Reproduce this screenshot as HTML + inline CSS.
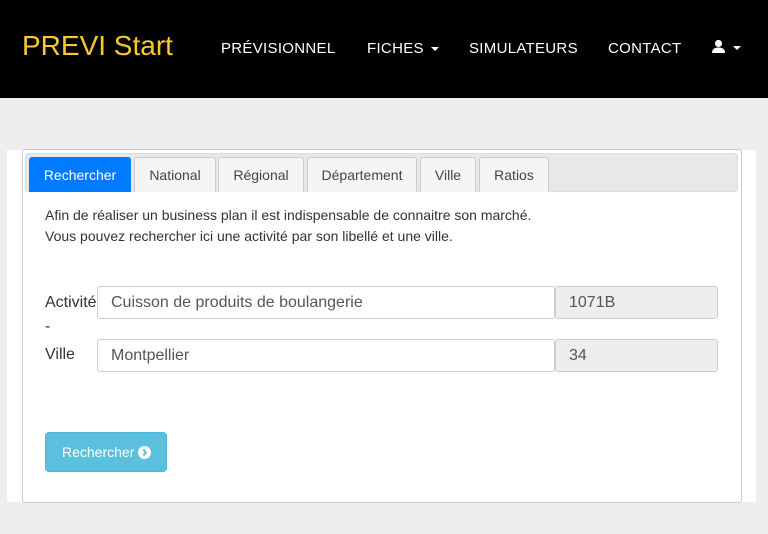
<!DOCTYPE html>
<html><head><meta charset="utf-8"><style>
*{box-sizing:border-box;margin:0;padding:0}
body{width:768px;height:534px;background:#eeeeee;font-family:"Liberation Sans",Arial,sans-serif;position:relative;overflow:hidden;color:#333}
.nav{position:absolute;left:0;top:0;width:768px;height:98px;background:#000}
.brand{position:absolute;left:22px;top:30px;font-size:28px;color:#f7c832}
.nl{position:absolute;top:40px;font-size:15px;color:#fff;letter-spacing:.3px}
.caret{display:inline-block;width:0;height:0;border-left:4px solid transparent;border-right:4px solid transparent;border-top:4px solid #fff;vertical-align:middle;margin-left:3px}
.wrap{position:absolute;left:7px;top:150px;width:749px;height:352px;background:#fff}
.panel{position:absolute;left:22px;top:149px;width:720px;height:354px;border:1px solid #ccc;border-radius:3px;background:#fff}
.tabbar{position:absolute;left:25px;top:153px;width:713px;height:39px;background:#e8e8e8;border:1px solid #ddd;border-radius:3px}
.tab{position:absolute;top:157px;height:35px;border:1px solid #ccc;border-bottom:none;border-radius:3px 3px 0 0;background:#f5f5f5;font-size:14px;color:#444;text-align:center;line-height:34px}
.tab.on{background:#007bff;border-color:#007bff;color:#fff}
.txt{position:absolute;left:45px;font-size:14px;color:#333}
.lbl{position:absolute;left:45px;font-size:16px;color:#333}
.in{position:absolute;height:33px;border:1px solid #ccc;border-radius:3px;font-size:16px;color:#555;padding-left:13px;line-height:31px;background:#fff}
.in.g{background:#eee}
.btn{position:absolute;left:45px;top:432px;width:122px;height:40px;background:#5bc0de;border:1px solid #46b8da;border-radius:4px;color:#fff;font-size:14px;line-height:38px;padding-left:16px}
.ic{display:inline-block;width:13px;height:13px;border-radius:50%;background:#fff;vertical-align:-2px;position:relative}
</style></head><body>
<div class="nav">
<div class="brand">PREVI Start</div>
<div class="nl" style="left:221px">PRÉVISIONNEL</div>
<div class="nl" style="left:367px">FICHES <span class="caret"></span></div>
<div class="nl" style="left:469px">SIMULATEURS</div>
<div class="nl" style="left:608px">CONTACT</div>
<div class="nl" style="left:711px;top:39px"><svg width="15" height="15" viewBox="0 0 15 15" style="vertical-align:-2px"><circle cx="7.5" cy="4.5" r="3.6" fill="#fff"/><path d="M1 14 Q1 8.5 7.5 8.5 Q14 8.5 14 14Z" fill="#fff"/></svg> <span class="caret"></span></div>
</div>
<div class="wrap"></div>
<div class="panel"></div>
<div class="tabbar"></div>
<div class="tab on" style="left:29px;width:102px">Rechercher</div>
<div class="tab" style="left:134px;width:82px">National</div>
<div class="tab" style="left:218px;width:86px">Régional</div>
<div class="tab" style="left:307px;width:110px">Département</div>
<div class="tab" style="left:420px;width:56px">Ville</div>
<div class="tab" style="left:479px;width:70px">Ratios</div>
<div class="txt" style="top:207px">Afin de réaliser un business plan il est indispensable de connaitre son marché.</div>
<div class="txt" style="top:228px">Vous pouvez rechercher ici une activité par son libellé et une ville.</div>
<div class="lbl" style="top:294px">Activité</div>
<div class="lbl" style="top:318px">-</div>
<div class="lbl" style="top:346px">Ville</div>
<div class="in" style="left:97px;top:286px;width:458px">Cuisson de produits de boulangerie</div>
<div class="in g" style="left:555px;top:286px;width:163px">1071B</div>
<div class="in" style="left:97px;top:339px;width:458px">Montpellier</div>
<div class="in g" style="left:555px;top:339px;width:163px">34</div>
<div class="btn">Rechercher <span class="ic"><svg width="13" height="13" viewBox="0 0 13 13" style="position:absolute;left:0;top:0"><path d="M5.3 3.6 L8 6.5 L5.3 9.4" stroke="#5bc0de" stroke-width="2" fill="none"/></svg></span></div>
</body></html>
